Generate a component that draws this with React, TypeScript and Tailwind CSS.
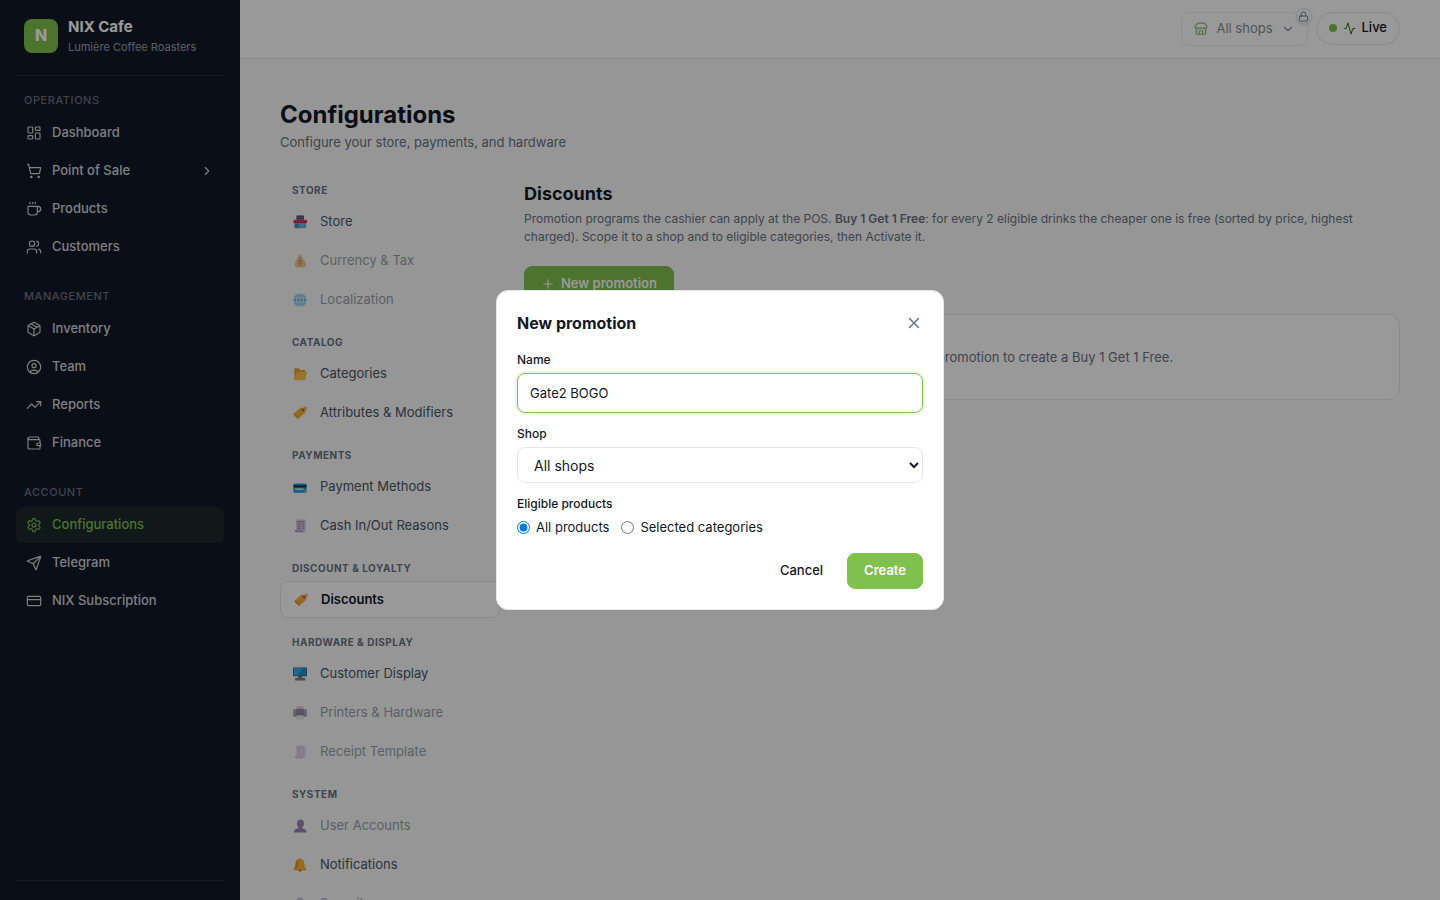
import { useState } from "react";
import type { ReactNode } from "react";
import {
  Activity,
  ChevronDown,
  ChevronRight,
  CircleUser,
  Coffee,
  CreditCard,
  LayoutDashboard,
  Lock,
  Package,
  Plus,
  Send,
  Settings,
  ShoppingCart,
  Store,
  TrendingUp,
  Users,
  Wallet,
  X,
} from "lucide-react";
import type { LucideIcon } from "lucide-react";

type NavItem = { label: string; icon: LucideIcon; active?: boolean; expandable?: boolean };
type ConfigItem = { label: string; glyph: keyof typeof glyphs; disabled?: boolean; active?: boolean };

const mainNav: { title: string; items: NavItem[] }[] = [
  {
    title: "OPERATIONS",
    items: [
      { label: "Dashboard", icon: LayoutDashboard },
      { label: "Point of Sale", icon: ShoppingCart, expandable: true },
      { label: "Products", icon: Coffee },
      { label: "Customers", icon: Users },
    ],
  },
  {
    title: "MANAGEMENT",
    items: [
      { label: "Inventory", icon: Package },
      { label: "Team", icon: CircleUser },
      { label: "Reports", icon: TrendingUp },
      { label: "Finance", icon: Wallet },
    ],
  },
  {
    title: "ACCOUNT",
    items: [
      { label: "Configurations", icon: Settings, active: true },
      { label: "Telegram", icon: Send },
      { label: "NIX Subscription", icon: CreditCard },
    ],
  },
];

// Small colour pictograms for the settings menu, all on a 32x32 grid
const glyphs = {
  store: (
    <>
      <rect x="8" y="1" width="17" height="10" rx="1" fill="#433b6b" />
      <path d="M11 3v5M15 3v5M19 3v5M22 3v5" stroke="#a79bd0" strokeWidth="1.5" />
      <rect x="3" y="14" width="27" height="16" fill="#9b9bb0" />
      <path d="M1 11h31v6H1z" fill="#e0325c" />
      <path d="M1 16h31v2H1z" fill="#b02050" />
      <rect x="5" y="20" width="8" height="10" fill="#3f8fc4" />
      <rect x="16" y="20" width="12" height="6" fill="#53c4e8" />
    </>
  ),
  money: (
    <>
      <path d="M13 8h7c6 5 9 11 9 16 0 5-3 7-8 7H12c-5 0-8-2-8-7 0-5 3-11 9-16z" fill="#f09a2c" />
      <path d="M12 1l3 2 2-2 2 2 3-1-3 6h-5z" fill="#f5ad3e" />
      <path d="M12 8h9" stroke="#8c5523" strokeWidth="2.5" />
      <path d="M20 16c-1-2-7-2-7 1s7 2 7 5-6 3-7 1M16 13v13" fill="none" stroke="#6a3a20" strokeWidth="2" />
    </>
  ),
  globe: (
    <>
      <circle cx="16" cy="16" r="15" fill="#2195e3" />
      <path d="M2 11h28M2 21h28M16 1v30" stroke="#b5e8ff" strokeWidth="2" />
      <ellipse cx="16" cy="16" rx="8" ry="15" fill="none" stroke="#b5e8ff" strokeWidth="2" />
    </>
  ),
  folder: (
    <>
      <path d="M3 5a2 2 0 0 1 2-2h8l4 4h9a2 2 0 0 1 2 2v20H3z" fill="#e8a02c" />
      <path d="M8 11h22a2 2 0 0 1 2 2l-4 15a2 2 0 0 1-2 2H5a2 2 0 0 1-2-2z" fill="#ffbe4a" />
    </>
  ),
  tag: (
    <>
      <path d="M23 9c2-8 9-9 9-5s-4 7-8 6" fill="none" stroke="#a8a2b5" strokeWidth="2" />
      <path d="M17 4l9 0c2 0 3 1 3 3l-1 8-14 13c-1 1-3 1-4 0l-8-7c-1-1-1-3 0-4z" fill="#f8ae38" />
      <path d="M1 19l10 10 2-1L2 17z" fill="#d8863a" />
      <circle cx="23" cy="9" r="3" fill="#dc4d56" />
      <circle cx="23" cy="9" r="1" fill="#823746" />
    </>
  ),
  card: (
    <>
      <rect x="1" y="8" width="30" height="21" rx="2" fill="#219bd9" />
      <path d="M1 12h30v5H1z" fill="#35334a" />
      <rect x="5" y="19" width="19" height="4" fill="#cde8ee" />
      <rect x="24" y="24" width="5" height="3" fill="#e3bf54" />
    </>
  ),
  receipt: (
    <>
      <path d="M7 1h22v24a5 5 0 0 1-5 5H7z" fill="#d1c5df" />
      <path d="M4 25h18c0 3 1 5 3 5H7c-2 0-3-2-3-5z" fill="#b79dcc" />
      <path d="M10 6h15M10 11h8M21 11h4M10 16h8M21 16h4M10 21h8M21 21h4" stroke="#8f829e" strokeWidth="2" />
    </>
  ),
  display: (
    <>
      <rect x="0" y="1" width="32" height="20" rx="1" fill="#46617c" />
      <rect x="2" y="2" width="28" height="17" fill="#1795d6" />
      <path d="M2 2h21L10 19H2z" fill="#38b0e8" />
      <path d="M12 21h9v4h-9z" fill="#685d76" />
      <path d="M5 25h23v6H5z" fill="#867b94" />
    </>
  ),
  printer: (
    <>
      <rect x="8" y="1" width="16" height="9" fill="#a99dba" />
      <rect x="0" y="7" width="32" height="18" rx="4" fill="#78668f" />
      <path d="M7 7h18v11H7z" fill="#4a2f7a" />
      <path d="M8 19h16v9a3 3 0 0 1-3 3H11a3 3 0 0 1-3-3z" fill="#d9d2e2" />
      <path d="M6 17h20v4H6z" fill="#2c1f4b" />
    </>
  ),
  user: (
    <>
      <ellipse cx="17" cy="10" rx="8" ry="9" fill="#4a2b80" />
      <path d="M12 17h9v4c6 1 10 4 10 8v2H2v-2c0-4 4-7 10-8z" fill="#4a2b80" />
    </>
  ),
  bell: (
    <>
      <path d="M13 3c0-3 6-3 6 0 5 1 7 5 7 10 0 6 2 8 4 11H2c2-3 4-5 4-11C6 8 8 4 13 3z" fill="#f9b72d" />
      <path d="M13 3C8 4 6 8 6 13c0 6-2 8-4 11h8c2-7 0-15 3-21z" fill="#ee8f2a" />
      <path d="M2 24h28v4H2z" fill="#f3a22b" />
      <path d="M13 28h7c0 4-7 4-7 0z" fill="#ae552c" />
    </>
  ),
  lock: (
    <>
      <path d="M10 14V9a6 6 0 0 1 12 0v5" fill="none" stroke="#9187a0" strokeWidth="4" />
      <rect x="4" y="14" width="24" height="17" rx="3" fill="#f0a63b" />
    </>
  ),
};

const configNav: { title: string; items: ConfigItem[] }[] = [
  {
    title: "STORE",
    items: [
      { label: "Store", glyph: "store" },
      { label: "Currency & Tax", glyph: "money", disabled: true },
      { label: "Localization", glyph: "globe", disabled: true },
    ],
  },
  {
    title: "CATALOG",
    items: [
      { label: "Categories", glyph: "folder" },
      { label: "Attributes & Modifiers", glyph: "tag" },
    ],
  },
  {
    title: "PAYMENTS",
    items: [
      { label: "Payment Methods", glyph: "card" },
      { label: "Cash In/Out Reasons", glyph: "receipt" },
    ],
  },
  { title: "DISCOUNT & LOYALTY", items: [{ label: "Discounts", glyph: "tag", active: true }] },
  {
    title: "HARDWARE & DISPLAY",
    items: [
      { label: "Customer Display", glyph: "display" },
      { label: "Printers & Hardware", glyph: "printer", disabled: true },
      { label: "Receipt Template", glyph: "receipt", disabled: true },
    ],
  },
  {
    title: "SYSTEM",
    items: [
      { label: "User Accounts", glyph: "user", disabled: true },
      { label: "Notifications", glyph: "bell" },
      { label: "Security", glyph: "lock", disabled: true },
    ],
  },
];

function Sidebar() {
  return (
    <aside className="flex w-60 shrink-0 flex-col bg-[#111827] px-4">
      <div className="flex h-[76px] items-center gap-2.5 border-b border-white/10 px-2 pb-1">
        <div className="flex size-[34px] items-center justify-center rounded-lg bg-[#80c04d] pb-0.5 text-base font-extrabold text-white">N</div>
        <div>
          <div className="text-[15px] leading-[22px] font-bold text-white">NIX Cafe</div>
          <div className="text-[11px] leading-[18px] text-gray-400">Lumière Coffee Roasters</div>
        </div>
      </div>

      <nav className="flex-1 overflow-hidden pt-4">
        {mainNav.map((group) => (
          <div key={group.title} className="mb-[23px]">
            <div className="mb-[7px] px-2 text-[11px] leading-4 font-medium tracking-wider text-gray-500">{group.title}</div>
            <div className="flex flex-col gap-0.5">
              {group.items.map(({ label, icon: Icon, active, expandable }) => (
                <a
                  key={label}
                  href="#"
                  className={`flex h-9 items-center gap-2.5 rounded-lg px-2.5 text-[13px] font-medium ${active ? "bg-[#80c04d]/10 text-[#80c04d]" : "text-gray-300"}`}
                >
                  <Icon size={16} strokeWidth={1.75} />
                  <span className="flex-1">{label}</span>
                  {expandable && <ChevronRight size={14} />}
                </a>
              ))}
            </div>
          </div>
        ))}
      </nav>
      <div className="h-5 border-t border-white/10" />
    </aside>
  );
}

function TopBar() {
  return (
    <header className="flex h-[59px] shrink-0 items-start justify-end gap-2 border-b border-gray-200 bg-white px-10 pt-3">
      <div className="relative">
        <button type="button" disabled className="flex h-[34px] items-center gap-2 rounded-lg border border-gray-200 px-3 text-[13px] text-gray-700 opacity-60">
          <Store size={14} className="text-[#4b8a1f]" />
          All shops
          <ChevronDown size={14} />
        </button>
        <span className="absolute -top-1 -right-1 flex size-4 items-center justify-center rounded-full border border-gray-200 bg-white text-gray-500 shadow-sm">
          <Lock size={11} />
        </span>
      </div>
      <button type="button" className="flex h-[33px] items-center gap-1.5 rounded-full border border-gray-200 px-3 pb-px text-[13px] font-medium text-gray-900">
        <span className="size-2 rounded-full bg-[#80c04d]" />
        <Activity size={13} className="text-[#3f7a1a]" />
        Live
      </button>
    </header>
  );
}

function ConfigMenu() {
  return (
    <nav className="w-[220px] shrink-0">
      {configNav.map((group) => (
        <div key={group.title} className="mb-3.5">
          <div className="mb-1 px-3 pt-0.5 text-[10px] leading-[17px] font-bold tracking-wider text-gray-500">{group.title}</div>
          <div className="flex flex-col gap-0.5">
            {group.items.map((item) => (
              <a
                key={item.label}
                href="#"
                aria-disabled={item.disabled}
                className={`flex h-[37px] items-center gap-3 rounded-lg px-3 text-[13px] ${item.active ? "border border-gray-200 bg-white font-semibold text-gray-900" : "text-gray-600"} ${item.disabled ? "opacity-55" : ""}`}
              >
                <span className="flex w-4 justify-center">
                  <svg viewBox="0 0 32 32" className="size-3.5 shrink-0" aria-hidden="true">{glyphs[item.glyph]}</svg>
                </span>
                {item.label}
              </a>
            ))}
          </div>
        </div>
      ))}
    </nav>
  );
}

function Field({ id, label, children }: { id: string; label: string; children: ReactNode }) {
  return (
    <div className="mb-3">
      <label htmlFor={id} className="mb-1 block text-[12px] leading-[18px] font-medium">{label}</label>
      {children}
    </div>
  );
}

function PromotionDialog() {
  const [name, setName] = useState("Gate2 BOGO");
  const [shop, setShop] = useState("all");
  const [scope, setScope] = useState("all");

  return (
    <div className="fixed inset-0 z-10 flex items-center justify-center bg-black/40 p-4">
      <div role="dialog" aria-modal="true" aria-labelledby="dialog-title" className="w-full max-w-md rounded-xl border border-gray-200 bg-white p-5 text-[#111827]">
        <div className="mb-4 flex items-center justify-between">
          <h3 id="dialog-title" className="text-base font-bold">New promotion</h3>
          <button type="button" aria-label="Close" className="text-gray-500">
            <X size={18} />
          </button>
        </div>

        <Field id="promo-name" label="Name">
          <input
            id="promo-name"
            type="text"
            value={name}
            onChange={(e) => setName(e.target.value)}
            className="h-10 w-full rounded-lg border border-[#80c04d] px-3 text-[13px] ring-2 ring-[#80c04d]/15 outline-none"
          />
        </Field>

        <Field id="promo-shop" label="Shop">
          <select
            id="promo-shop"
            value={shop}
            onChange={(e) => setShop(e.target.value)}
            className="block h-9 w-full rounded-lg border border-gray-200 bg-white px-3 text-sm"
          >
            <option value="all">All shops</option>
          </select>
        </Field>

        <fieldset>
          <legend className="mb-1 text-[12px] leading-[18px] font-medium">Eligible products</legend>
          <div className="flex gap-3 text-[13px] leading-5">
            <label className="flex items-center gap-1.5">
              <input type="radio" name="scope" checked={scope === "all"} onChange={() => setScope("all")} className="accent-[#0078d7]" />
              All products
            </label>
            <label className="flex items-center gap-1.5">
              <input type="radio" name="scope" checked={scope === "selected"} onChange={() => setScope("selected")} className="accent-[#0078d7]" />
              Selected categories
            </label>
          </div>
        </fieldset>

        <div className="mt-4 flex justify-end gap-2 text-[13px] font-medium">
          <button type="button" className="h-9 rounded-lg px-4">Cancel</button>
          <button type="button" className="h-9 rounded-lg border border-[#80c04d] bg-[#80c04d] px-4 font-semibold text-white">Create</button>
        </div>
      </div>
    </div>
  );
}

export default function App() {
  return (
    <div className="flex h-screen overflow-hidden bg-[#f8fbf8] font-['Inter',sans-serif]">
      <Sidebar />
      <div className="flex min-w-0 flex-1 flex-col">
        <TopBar />
        <main className="min-h-0 flex-1 overflow-hidden px-10 pt-10">
          <h1 className="text-2xl font-bold text-[#111827]">Configurations</h1>
          <p className="mt-0.5 text-[13px] leading-[18px] text-gray-500">Configure your store, payments, and hardware</p>

          <div className="mt-[29px] flex gap-6">
            <ConfigMenu />
            <section className="min-w-0 flex-1">
              <h2 className="text-lg font-bold text-[#111827]">Discounts</h2>
              <p className="mt-0.5 text-[12px] leading-[18px] text-gray-500">
                Promotion programs the cashier can apply at the POS. <strong className="font-semibold">Buy 1 Get 1 Free</strong>: for every 2 eligible drinks the cheaper one is free (sorted by price, highest charged). Scope it to a shop and to eligible categories, then Activate it.
              </p>
              <button type="button" className="mt-5 flex h-9 items-center gap-1.5 rounded-lg border border-[#80c04d] bg-[#80c04d] px-4 text-[13px] font-semibold text-white">
                <Plus size={14} />
                New promotion
              </button>
              <div className="mt-3 rounded-xl border border-gray-200 bg-white p-8 text-center text-[13px] leading-5 text-gray-500">
                No promotions yet. Click New promotion to create a Buy 1 Get 1 Free.
              </div>
            </section>
          </div>
        </main>
      </div>
      <PromotionDialog />
    </div>
  );
}
